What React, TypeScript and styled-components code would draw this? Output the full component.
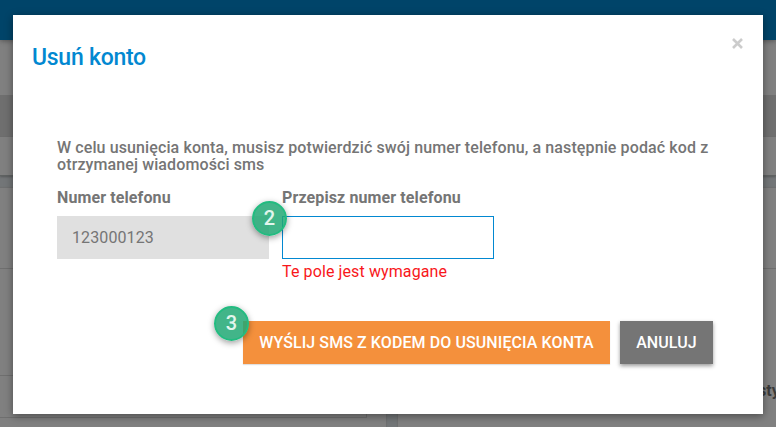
import React from 'react';
import styled, { createGlobalStyle } from 'styled-components';

const GlobalStyle = createGlobalStyle`
  * { box-sizing: border-box; }
  body { margin: 0; font-family: Roboto, "Liberation Sans", sans-serif; font-size: 16px; overflow: hidden; }
`;

const Screen = styled.div`
  position: relative;
  width: 776px;
  height: 427px;
  overflow: hidden;
  background: #737678;
  display: flex;
  flex-direction: column;
`;

const TopBar = styled.header`
  height: 40px;
  flex: none;
  background: #004469;
  box-shadow: 0 1px 5px rgba(0, 0, 0, 0.35);
  z-index: 1;
`;

const Strip = styled.div<{ $height: number; $dark?: boolean }>`
  height: ${p => p.$height}px;
  flex: none;
  background: ${p => (p.$dark ? '#6f6f6f' : '#808080')};
`;

const LowerStrip = styled(Strip)`
  border-bottom: 1px solid #5f6262;
  box-shadow: 0 1px 2px rgba(0, 0, 0, 0.25);
`;

const Columns = styled.div`
  flex: 1;
  display: grid;
  grid-template-columns: 386px 1fr;
  column-gap: 12px;
  margin-top: 12px;
`;

const Panel = styled.section`
  background: #808080;
  box-shadow: 0 0 1px 1px #6f7071;
  overflow: hidden;
`;

const PanelRow = styled.div<{ $height: number; $inset?: boolean }>`
  height: ${p => p.$height}px;
  margin-right: ${p => (p.$inset ? 19 : 0)}px;
  border-bottom: 1px solid #6f6f6f;
  border-right: ${p => (p.$inset ? '1px solid #6f6f6f' : '0')};
`;

const PanelHeading = styled.div`
  padding: 112px 0 0 360px;
  font-size: 16px;
  line-height: 20px;
  font-weight: 700;
  color: #3b3b3b;
  white-space: nowrap;
`;

const Dialog = styled.main`
  position: absolute;
  z-index: 2;
  left: 13px;
  top: 15px;
  width: 750px;
  height: 399px;
  background: #fff;
  box-shadow: 0 2px 8px rgba(0, 0, 0, 0.42);
`;

const DialogHeader = styled.header`
  display: flex;
  justify-content: space-between;
  align-items: flex-start;
  height: 124px;
  padding: 16px 18px 0 19px;
`;

const Title = styled.h1`
  margin: 14px 0 0;
  font-size: 23px;
  line-height: 26px;
  letter-spacing: -0.26px;
  font-weight: 500;
  color: #0288d1;
`;

const Close = styled.button`
  border: 0;
  padding: 0;
  margin-top: 7px;
  background: none;
  display: flex;
  color: #ccc;
`;

const Body = styled.div`
  padding: 0 44px;
  color: #757575;
  letter-spacing: 0.11px;
`;

const Message = styled.p`
  margin: 0;
  width: 670px;
  font-weight: 500;
  line-height: 17px;
`;

const Fields = styled.div`
  display: flex;
  gap: 13px;
  margin-top: 15px;
  height: 133px;
`;

const Field = styled.div`
  position: relative;
  width: 212px;
`;

const Label = styled.label`
  display: block;
  height: 28px;
  line-height: 20px;
  font-weight: 700;
  white-space: nowrap;
`;

const Input = styled.input<{ $active?: boolean }>`
  display: block;
  width: 212px;
  height: 43px;
  padding: 0 15px;
  border: ${p => (p.$active ? '1px solid #0288d1' : '0')};
  border-radius: 0;
  outline: none;
  background: ${p => (p.$active ? '#fff' : '#e0e0e0')};
  font: 400 16px Roboto, sans-serif;
  letter-spacing: 0.11px;
  color: #757575;
`;

const ErrorText = styled.div`
  margin-top: 3px;
  line-height: 20px;
  color: #f8171b;
`;

const Actions = styled.div`
  display: flex;
  justify-content: flex-end;
  gap: 10px;
  margin-right: 6px;
`;

const Action = styled.button<{ $primary?: boolean }>`
  position: relative;
  width: ${p => (p.$primary ? 367 : 93)}px;
  height: 43px;
  padding: 0;
  border: 0;
  background: ${p => (p.$primary ? '#f4903c' : '#757575')};
  color: #fff;
  font: 500 16px Roboto, sans-serif;
  letter-spacing: 0.09px;
  white-space: nowrap;
  box-shadow: ${p => (p.$primary ? '0 1px 1px rgba(0,0,0,.12)' : '0 2px 4px rgba(0,0,0,.4)')};
`;

const Step = styled.span<{ $left: number; $top: number }>`
  position: absolute;
  left: ${p => p.$left}px;
  top: ${p => p.$top}px;
  width: 35px;
  height: 35px;
  border: 2px solid #23bb80;
  border-radius: 50%;
  background: rgba(33, 168, 116, 0.85);
  box-shadow: 0 2px 6px rgba(0, 0, 0, 0.38);
  color: #e2f5ed;
  font-size: 20px;
  line-height: 31px;
  font-weight: 500;
  letter-spacing: 0;
  text-align: center;
`;

export default function App() {
  return (
    <Screen>
      <GlobalStyle />
      <TopBar />
      <Strip $height={55} />
      <Strip $height={42} $dark />
      <LowerStrip $height={39} />
      <Columns>
        <Panel>
          <PanelRow $height={81} />
          <PanelRow $height={107} />
          <PanelRow $height={42} $inset />
        </Panel>
        <Panel>
          <PanelRow $height={81} />
          <PanelHeading>sty</PanelHeading>
        </Panel>
      </Columns>
      <Dialog role="dialog" aria-labelledby="dialog-title">
        <DialogHeader>
          <Title id="dialog-title">Usuń konto</Title>
          <Close aria-label="Zamknij">
            <svg width="15" height="11" viewBox="0 0 15 11" fill="none" stroke="currentColor" strokeWidth="2.6">
              <path d="M3 1L12 10M12 1L3 10" />
            </svg>
          </Close>
        </DialogHeader>
        <Body>
          <Message>
            W celu usunięcia konta, musisz potwierdzić swój numer telefonu, a następnie podać kod z otrzymanej wiadomości sms
          </Message>
          <Fields>
            <Field>
              <Label htmlFor="phone">Numer telefonu</Label>
              <Input id="phone" value="123000123" readOnly />
            </Field>
            <Field>
              <Label htmlFor="confirm">Przepisz numer telefonu</Label>
              <Input id="confirm" $active />
              <ErrorText>Te pole jest wymagane</ErrorText>
              <Step $left={-30} $top={13}>2</Step>
            </Field>
          </Fields>
          <Actions>
            <Action $primary>
              WYŚLIJ SMS Z KODEM DO USUNIĘCIA KONTA
              <Step $left={-29} $top={-15}>3</Step>
            </Action>
            <Action>ANULUJ</Action>
          </Actions>
        </Body>
      </Dialog>
    </Screen>
  );
}
